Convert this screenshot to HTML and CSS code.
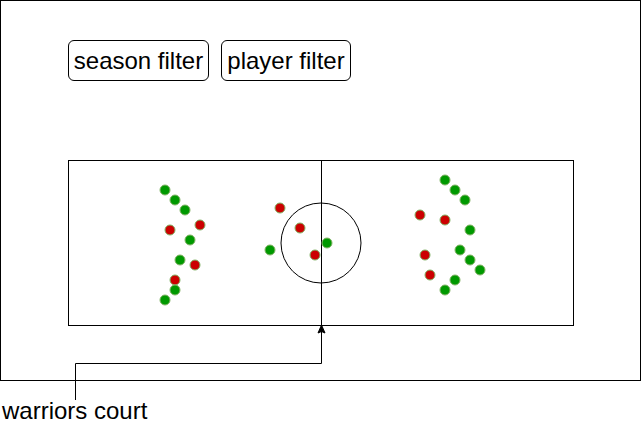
FILE: index.html
```html
<!DOCTYPE html>
<html lang="en">
<head>
    <meta charset="UTF-8">
    <title>Warriors Court</title>
    <meta name="viewport" content="width=device-width">
    <link rel="stylesheet" href="styles.css">
</head>
<body>
    <div class="frame">
        <div class="filters">
            <button class="filter">season filter</button>
            <button class="filter">player filter</button>
        </div>

        <!-- court: dots are shot spots, placed by coordinates -->
        <svg class="court" width="506" height="166" viewBox="0 0 506 166">
            <rect x="0.5" y="0.5" width="505" height="165" fill="none" stroke="#000"/>
            <line x1="253.5" y1="0" x2="253.5" y2="166" stroke="#000"/>
            <circle cx="253" cy="83" r="40" fill="none" stroke="#000"/>
            <g class="dots">
                <circle class="made" cx="97" cy="30" r="5"/>
                <circle class="made" cx="107" cy="40" r="5"/>
                <circle class="made" cx="117" cy="50" r="5"/>
                <circle class="miss" cx="132" cy="65" r="5"/>
                <circle class="miss" cx="102" cy="70" r="5"/>
                <circle class="made" cx="122" cy="80" r="5"/>
                <circle class="made" cx="112" cy="100" r="5"/>
                <circle class="miss" cx="127" cy="105" r="5"/>
                <circle class="miss" cx="107" cy="120" r="5"/>
                <circle class="made" cx="107" cy="130" r="5"/>
                <circle class="made" cx="97" cy="140" r="5"/>

                <circle class="miss" cx="212" cy="48" r="5"/>
                <circle class="miss" cx="232" cy="68" r="5"/>
                <circle class="made" cx="259" cy="83" r="5"/>
                <circle class="made" cx="202" cy="90" r="5"/>
                <circle class="miss" cx="247" cy="95" r="5"/>

                <circle class="made" cx="377" cy="20" r="5"/>
                <circle class="made" cx="387" cy="30" r="5"/>
                <circle class="made" cx="397" cy="40" r="5"/>
                <circle class="miss" cx="352" cy="55" r="5"/>
                <circle class="miss" cx="377" cy="60" r="5"/>
                <circle class="made" cx="402" cy="70" r="5"/>
                <circle class="made" cx="392" cy="90" r="5"/>
                <circle class="miss" cx="357" cy="95" r="5"/>
                <circle class="made" cx="402" cy="100" r="5"/>
                <circle class="made" cx="412" cy="110" r="5"/>
                <circle class="miss" cx="362" cy="115" r="5"/>
                <circle class="made" cx="387" cy="120" r="5"/>
                <circle class="made" cx="377" cy="130" r="5"/>
            </g>
        </svg>
    </div>

    <p class="label">warriors court</p>

    <!-- connector from the label to the court -->
    <svg class="connector" width="641" height="424" viewBox="0 0 641 424">
        <path d="M75.5 400 V363.5 H321.5 V331" fill="none" stroke="#000"/>
        <path d="M321.5 325 L325 333 L321.5 331.5 L318 333 Z" fill="#000" stroke="#000"/>
    </svg>
</body>
</html>
```

FILE: styles.css
```css
*{
    padding: 0;
    margin: 0;
    box-sizing: border-box;
}
body{
    font-family: "Liberation Sans", Arial, Helvetica, sans-serif;
    background: #fff;
    color: #000;
    width: 641px;
    height: 424px;
    position: relative;
    overflow: hidden;
}
.frame{
    width: 641px;
    height: 381px;
    border: 1px solid #000;
    padding: 39px 0 0 67px;
}
.filters{
    display: flex;
    gap: 12px;
}
.filter{
    font-family: inherit;
    font-size: 24px;
    color: #000;
    background: #fff;
    border: 1px solid #000;
    border-radius: 6px;
    height: 41px;
    padding: 0;
    line-height: 1;
    white-space: nowrap;
}
.filter:first-child{
    width: 141px;
}
.filter:last-child{
    width: 130px;
}
.court{
    display: block;
    margin-top: 79px;
}
.dots circle{
    stroke: #82b366;
    stroke-width: 1;
}
.dots .made{
    fill: #009900;
}
.dots .miss{
    fill: #cc0000;
}
.label{
    font-size: 24px;
    line-height: 28px;
    padding: 16px 0 0 2px;
}
.connector{
    position: absolute;
    left: 0;
    top: 0;
    pointer-events: none;
}
```
